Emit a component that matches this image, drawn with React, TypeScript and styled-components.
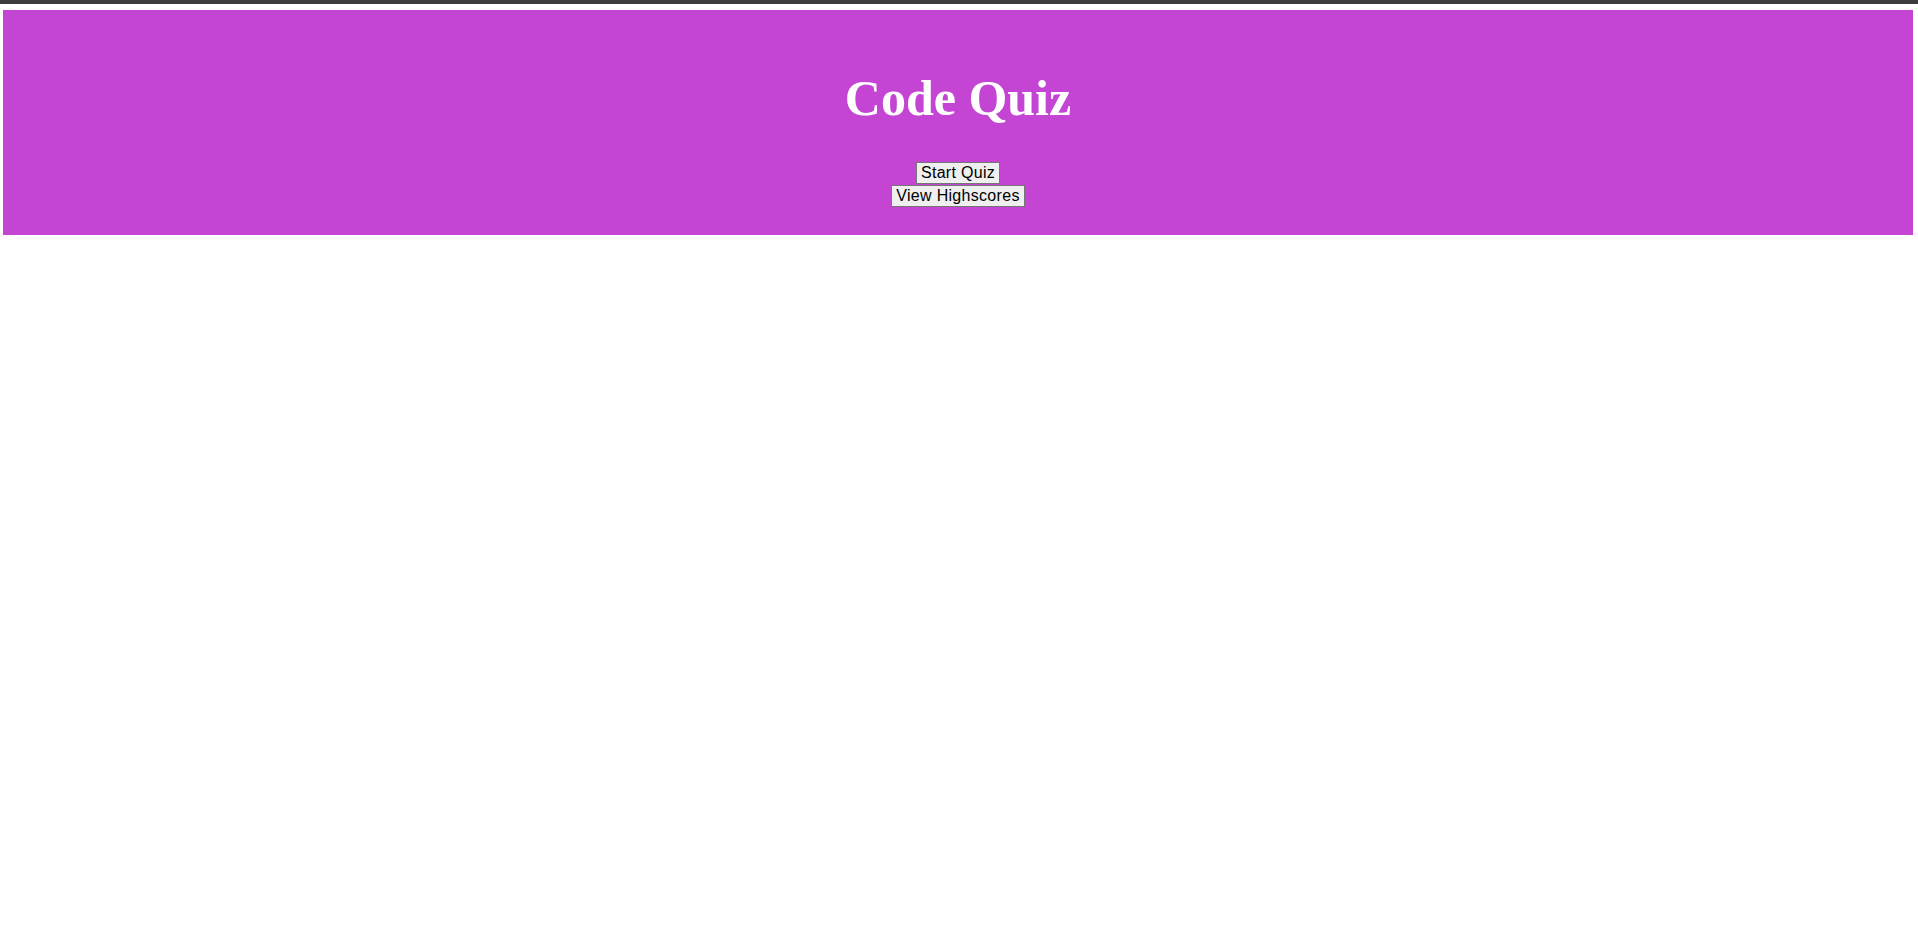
import React from "react";
import styled, { createGlobalStyle } from "styled-components";

const Global = createGlobalStyle`
  html, body { margin: 0; padding: 0; background: #ffffff; }
  body { font-family: "Liberation Serif", "Times New Roman", serif; }
`;

const TopBar = styled.div`
  height: 4px;
  background: #3c3c3c;
`;

const Header = styled.header`
  margin: 6px 5px 0 3px;
  background: #c445d4;
  height: 225px;
  box-sizing: border-box;
  padding-top: 60px;
  display: flex;
  flex-direction: column;
  align-items: center;
`;

const Title = styled.h1`
  margin: 0;
  font-family: "Liberation Serif", "Times New Roman", serif;
  font-weight: 700;
  font-size: 50px;
  line-height: 57px;
  color: #ffffff;
`;

const Actions = styled.div`
  margin-top: 35px;
  display: flex;
  flex-direction: column;
  align-items: center;
  gap: 1px;
`;

const Button = styled.button`
  font-family: "Liberation Sans", Arial, sans-serif;
  font-size: 16px;
  line-height: 18px;
  letter-spacing: 0.3px;
  color: #000000;
  background: #efefef;
  border: 1px solid #767676;
  border-radius: 0;
  padding: 1px 4px;
  cursor: pointer;
`;

export default function App() {
  return (
    <>
      <Global />
      <TopBar />
      <Header>
        <Title>Code Quiz</Title>
        <Actions>
          <Button type="button">Start Quiz</Button>
          <Button type="button">View Highscores</Button>
        </Actions>
      </Header>
    </>
  );
}
